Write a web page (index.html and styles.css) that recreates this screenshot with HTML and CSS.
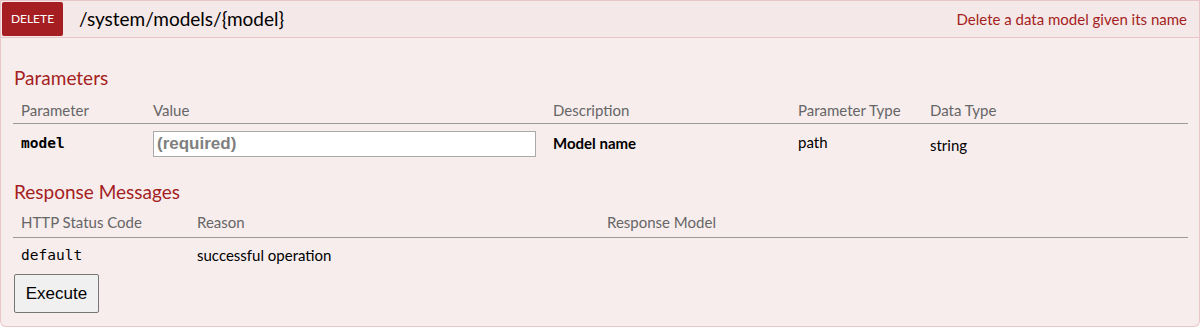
FILE: index.html
```html
<!DOCTYPE html>
<html lang="en">
<head>
    <meta charset="UTF-8">
    <title>DELETE /system/models/{model}</title>
    <link rel="stylesheet" href="styles.css">
</head>
<body>
    <div class="operation">
        <div class="heading">
            <span class="http-method">DELETE</span>
            <span class="path">/system/models/{model}</span>
            <span class="summary">Delete a data model given its name</span>
        </div>
        <div class="content">
            <h4>Parameters</h4>
            <table class="params">
                <thead>
                    <tr>
                        <th class="col-param">Parameter</th>
                        <th class="col-value">Value</th>
                        <th class="col-desc">Description</th>
                        <th class="col-ptype">Parameter Type</th>
                        <th>Data Type</th>
                    </tr>
                </thead>
                <tbody>
                    <tr>
                        <td class="code required">model</td>
                        <td><input class="param-input" type="text" placeholder="(required)"></td>
                        <td class="strong">Model name</td>
                        <td class="ptype">path</td>
                        <td class="dtype">string</td>
                    </tr>
                </tbody>
            </table>

            <h4>Response Messages</h4>
            <table class="responses">
                <thead>
                    <tr>
                        <th class="col-code">HTTP Status Code</th>
                        <th class="col-reason">Reason</th>
                        <th>Response Model</th>
                    </tr>
                </thead>
                <tbody>
                    <tr>
                        <td class="code">default</td>
                        <td>successful operation</td>
                        <td></td>
                    </tr>
                </tbody>
            </table>
            <button class="submit">Execute</button>
        </div>
    </div>
</body>
</html>
```

FILE: styles.css
```css
body {
    margin: 0;
    font-family: Lato, "Liberation Sans", sans-serif;
    background: #ffffff;
}
.operation {
    width: 1200px;
}
.heading {
    display: flex;
    align-items: center;
    height: 38px;
    background: #f5e8e8;
    border: 1px solid #e8c6c7;
    box-sizing: border-box;
    padding: 0 12px 0 1px;
}
.http-method {
    display: inline-block;
    width: 61px;
    height: 34px;
    line-height: 34px;
    background: #a41e22;
    color: #ffffff;
    font-size: 12px;
    text-align: center;
    border-radius: 2px;
}
.path {
    margin-left: 16px;
    font-size: 19px;
    color: #000000;
    padding-bottom: 1px;
}
.summary {
    margin-left: auto;
    font-size: 15px;
    color: #a41e22;
}
.content {
    background: #f7eded;
    border: 1px solid #e8c6c7;
    border-top: none;
    border-radius: 0 0 6px 6px;
    padding: 28px 12px 0 13px;
    height: 289px;
    box-sizing: border-box;
}
h4 {
    margin: 0;
    font-size: 19px;
    font-weight: normal;
    color: #a41e22;
    line-height: 24px;
}
table {
    width: 1175px;
    margin-left: -1px;
    border-collapse: collapse;
    font-size: 15px;
}
th {
    text-align: left;
    font-weight: normal;
    color: #666666;
    padding: 11px 0 4px 8px;
    line-height: 18px;
    border-bottom: 1px solid #999999;
}
td {
    padding: 9px 0 0 8px;
    line-height: 20px;
    vertical-align: top;
    color: #000000;
}
.params {
    margin-bottom: 23px;
}
.col-param { width: 124px; }
.col-value { width: 392px; }
.col-desc { width: 237px; }
.col-ptype { width: 124px; }
.code {
    font-family: "DejaVu Sans Mono", "Liberation Mono", monospace;
    font-size: 14.5px;
}
.required,
.strong {
    font-weight: bold;
}
.ptype {
    padding-top: 8px;
}
.dtype {
    padding-top: 11px;
}
.param-input {
    display: block;
    width: 383px;
    height: 26px;
    box-sizing: border-box;
    margin: -2px 0 0 0;
    border: 1px solid #aaaaaa;
    padding: 2px 3px;
    font-family: "Liberation Sans", Arial, sans-serif;
    font-size: 17px;
    background: #ffffff;
}
.param-input::placeholder {
    color: #808080;
    font-weight: bold;
}
.col-code { width: 168px; }
.col-reason { width: 402px; }
.responses th {
    padding: 9px 0 6px 8px;
}
.responses td {
    padding-top: 7px;
}
.submit {
    display: block;
    margin-top: 9px;
    width: 85px;
    height: 39px;
    font-family: "Liberation Sans", Arial, sans-serif;
    font-size: 17px;
    color: #000000;
    background: #f0f0f0;
    border: 1px solid #767676;
    border-radius: 2px;
}
```
